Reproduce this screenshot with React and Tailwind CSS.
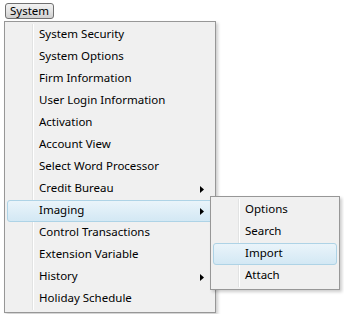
import React from 'react';

const mainItems = [
  { label: 'System Security' },
  { label: 'System Options' },
  { label: 'Firm Information' },
  { label: 'User Login Information' },
  { label: 'Activation' },
  { label: 'Account View' },
  { label: 'Select Word Processor' },
  { label: 'Credit Bureau', sub: true },
  { label: 'Imaging', sub: true, active: true },
  { label: 'Control Transactions' },
  { label: 'Extension Variable' },
  { label: 'History', sub: true },
  { label: 'Holiday Schedule' },
];

const subItems = [
  { label: 'Options' },
  { label: 'Search' },
  { label: 'Import', active: true },
  { label: 'Attach' },
];

const Arrow = () => (
  <svg width="4" height="7" viewBox="0 0 4 7" className="block">
    <path d="M0 0 L4 3.5 L0 7 Z" fill="#000" />
  </svg>
);

const Row = ({ label, sub, active }) => (
  <div className="relative h-[22px] flex items-center pl-[33px] pr-[10px]">
    {active && (
      <div className="absolute inset-y-0 left-[1px] right-[1px] rounded-[3px] border border-[#aed3e6] bg-gradient-to-b from-[#eaf4fa] to-[#d3e8f4]" />
    )}
    <span className="relative flex-1 pb-[2px]">{label}</span>
    {sub && <span className="relative"><Arrow /></span>}
  </div>
);

// dropdown panel; the gutter lines are drawn as a background on the list
const Menu = ({ items, className }) => (
  <div className={`absolute border border-[#979797] bg-[#f0f0f0] py-[2px] px-[1px] shadow-[2px_2px_3px_rgba(0,0,0,0.2)] ${className}`}>
    <div className="bg-[linear-gradient(to_right,transparent_26px,#e2e3e3_26px,#e2e3e3_27px,#fff_27px,#fff_28px,transparent_28px)]">
      {items.map((it) => (
        <Row key={it.label} {...it} />
      ))}
    </div>
  </div>
);

const App = () => {
  return (
    <div
      className="relative w-[344px] h-[314px] bg-white text-[11.5px] text-black leading-none"
      style={{ fontFamily: '"Segoe UI", "Noto Sans", sans-serif' }}
    >
      <div className="pt-[3px] pl-[5px]">
        <div className="inline-flex items-center h-[16px] px-[4px] pb-[1px] rounded-[3px] border border-[#707070] bg-gradient-to-b from-[#f2f2f2] via-[#e4e4e4] to-[#cfcfcf]">
          System
        </div>
      </div>

      <Menu items={mainItems} className="left-[4px] top-[21px] w-[212px]" />
      <Menu items={subItems} className="left-[210px] top-[196px] w-[130px]" />
    </div>
  );
};

export default App;
